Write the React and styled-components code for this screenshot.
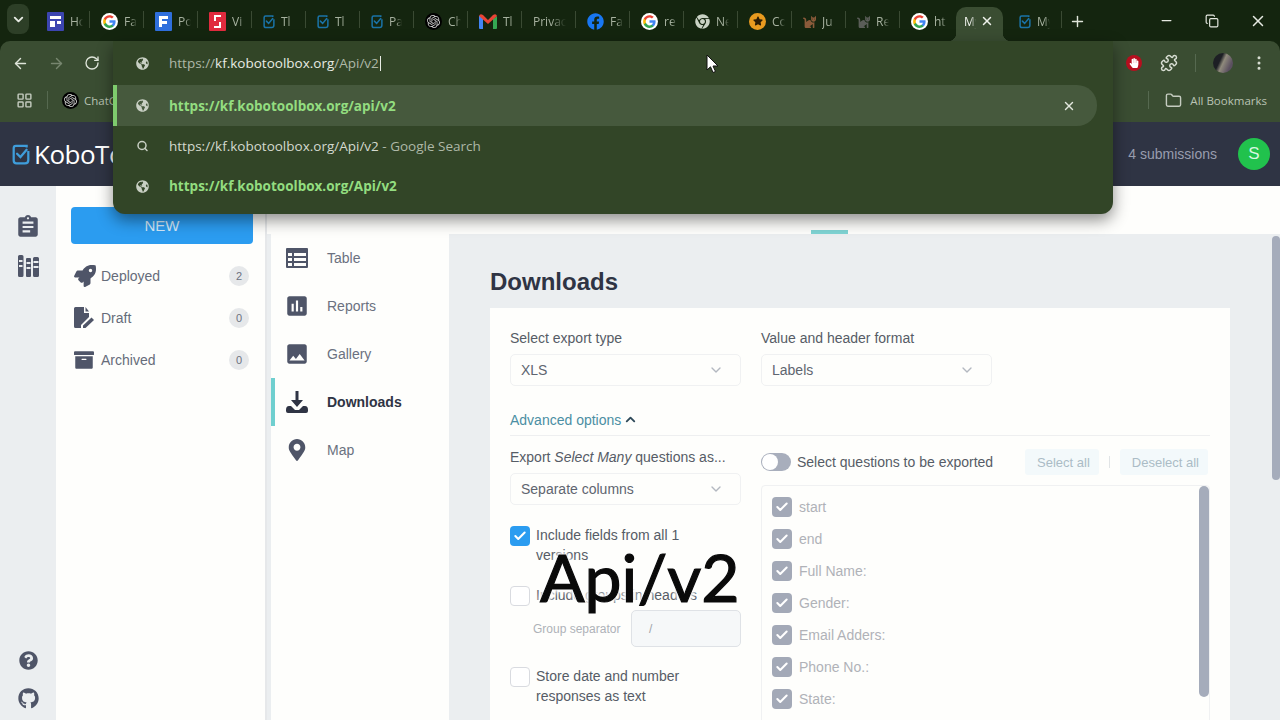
import styled, { createGlobalStyle } from "styled-components";
import {
  ChevronDown,
  ChevronUp,
  ArrowLeft,
  ArrowRight,
  RotateCw,
  X,
  Plus,
  Minus,
  Search,
  Puzzle,
  Folder,
  LayoutGrid,
  EllipsisVertical,
  Check,
  Copy,
} from "lucide-react";
import {
  FaRocket,
  FaArchive,
  FaQuestionCircle,
  FaGithub,
  FaFacebook,
  FaChrome,
  FaStar,
  FaHandPaper,
  FaGlobeAmericas,
  FaMapMarkerAlt,
  FaCat,
} from "react-icons/fa";
import { MdAssessment, MdImage, MdAssignment } from "react-icons/md";
import { SiOpenai } from "react-icons/si";

const GlobalStyle = createGlobalStyle`
  html, body {
    margin: 0;
    padding: 0;
    width: 1280px;
    height: 720px;
    overflow: hidden;
    background: #ebeef0;
  }
  * { box-sizing: border-box; }
`;

function GoogleIcon() {
  return (
    <svg width="17" height="17" viewBox="0 0 24 24">
      <circle cx="12" cy="12" r="12" fill="#fff" />
      <path fill="#4285F4" d="M20.6 12.2c0-.6-.1-1.2-.2-1.8H12v3.4h4.8c-.2 1.1-.8 2-1.8 2.7v2.2h2.9c1.7-1.5 2.7-3.8 2.7-6.5z" />
      <path fill="#34A853" d="M12 21c2.4 0 4.4-.8 5.9-2.2L15 16.6c-.8.5-1.8.9-3 .9-2.3 0-4.3-1.6-5-3.7H4v2.3C5.5 19 8.5 21 12 21z" />
      <path fill="#FBBC05" d="M7 13.8c-.2-.5-.3-1.2-.3-1.8s.1-1.2.3-1.8V7.9H4C3.400 9.100 3 10.500 3 12s.4 2.900 1 4.100l3-2.300z" />
      <path fill="#EA4335" d="M12 6.500c1.300 0 2.500.5 3.400 1.300l2.600-2.600C16.400 3.800 14.400 3 12 3 8.500 3 5.500 5 4 7.900l3 2.300c.7-2.100 2.700-3.700 5-3.700z" />
    </svg>
  );
}

function KoboMark({ size = 18, color = "#3f9ddb" }) {
  return (
    <svg width={size} height={size * 1.25} viewBox="0 0 16 20" fill="none" stroke={color} strokeWidth="2">
      <path d="M13 4 V2.500 H3.500 Q1.500 2.500 1.500 4.500 V15.500 Q1.500 18 4 18 H11.500 Q14.500 18 14.500 15 V7" />
      <path d="M4.500 9.500 L7.500 12.500 L13 6" strokeLinecap="round" />
    </svg>
  );
}

function SheetIcon({ color, children }) {
  return (
    <svg width="17" height="19" viewBox="0 0 17 19">
      <rect width="17" height="19" fill={color} rx="1" />
      {children}
    </svg>
  );
}

function GmailIcon() {
  return (
    <svg width="18" height="15" viewBox="0 0 18 15">
      <path fill="#4285f4" d="M0 2 H4 V15 H1 Q0 15 0 14 Z" />
      <path fill="#34a853" d="M14 5 L18 2 V14 Q18 15 17 15 H14 Z" />
      <path fill="#ea4335" d="M0 2 Q1 -1 4 1 L9 6 L14 1 Q17 -1 18 2 L9 10 Z" />
    </svg>
  );
}

function BadgeIcon({ children, $bg }) {
  return <RoundBadge $bg={$bg}>{children}</RoundBadge>;
}

function TableIcon() {
  return (
    <svg width="22" height="20" viewBox="0 0 22 20">
      <path
        fill="#4f5568"
        fillRule="evenodd"
        d="M1 0 H21 Q22 0 22 1 V19 Q22 20 21 20 H1 Q0 20 0 19 V1 Q0 0 1 0 Z M2 5 V8 H6 V5 Z M8 5 V8 H20 V5 Z M2 10 V13 H6 V10 Z M8 10 V13 H20 V10 Z M2 15 V18 H6 V15 Z M8 15 V18 H20 V15 Z"
      />
    </svg>
  );
}

function DownloadIcon() {
  return (
    <svg width="22" height="22" viewBox="0 0 22 22">
      <path fill="#2f3444" d="M9.500 0 H12.500 V9 H17 L11 16 L5 9 H9.500 Z" />
      <path fill="#2f3444" d="M0 19 Q0 15 3 15 H5 L9 19 H13 L17 15 H19 Q22 15 22 19 V20 Q22 22 20 22 H2 Q0 22 0 20 Z" />
    </svg>
  );
}

function DraftIcon() {
  return (
    <svg width="22" height="23" viewBox="0 0 22 23">
      <path fill="#4f5568" d="M1.500 0 H10 V6 H15 V10 L7 18 V21 H1.500 Q0 21 0 19.500 V1.500 Q0 0 1.500 0 Z" />
      <path fill="#4f5568" d="M11.500 0 L15 4.500 H11.500 Z" />
      <path fill="#4f5568" d="M9 21 V18.500 L17.500 10.500 L20 13 L11.500 21 Z" />
    </svg>
  );
}

function LibraryIcon() {
  return (
    <svg width="21" height="22" viewBox="0 0 21 22">
      <path
        fill="#4f5568"
        fillRule="evenodd"
        d="M1.500 0 H4 Q5.500 0 5.500 1.500 V20.500 Q5.500 22 4 22 H1.500 Q0 22 0 20.500 V1.500 Q0 0 1.500 0 Z M1 5 V7 H4.500 V5 Z M1 10 V12 H4.500 V10 Z"
      />
      <path
        fill="#4f5568"
        fillRule="evenodd"
        d="M9 3 H12 Q13 3 13 4 V21 Q13 22 12 22 H9 Q8 22 8 21 V4 Q8 3 9 3 Z M8.500 7 V9 H12.500 V7 Z M8.500 12 V14 H12.500 V12 Z"
      />
      <path
        fill="#4f5568"
        fillRule="evenodd"
        d="M16.500 2 H19.500 Q21 2 21 3.500 V20.500 Q21 22 19.500 22 H16.500 Q15 22 15 20.500 V3.500 Q15 2 16.500 2 Z M15.500 6 V8 H20.500 V6 Z M15.500 11 V13 H20.500 V11 Z"
      />
    </svg>
  );
}

const tabs = [
  { label: "Ho", icon: <SheetIcon color="#3c45b0"><path fill="#fff" d="M3 4 H14 V7 H3 Z M3 9 H8 V15 H3 Z M10 9 H14 V12 H10 Z" /></SheetIcon> },
  { label: "Fa", icon: <GoogleIcon /> },
  { label: "Po", icon: <SheetIcon color="#2f6fdc"><path fill="#fff" d="M4 4 H13 V7 H7 V9 H12 V12 H7 V15 H4 Z" /></SheetIcon> },
  { label: "Vi", icon: <SheetIcon color="#e02b3e"><path fill="none" stroke="#fff" strokeWidth="2" d="M12 4 H6 V9 M5 15 H11 V10" /></SheetIcon> },
  { label: "Tl", icon: <KoboMark size={12} color="#1a73a8" /> },
  { label: "Tl", icon: <KoboMark size={12} color="#1a73a8" /> },
  { label: "Pa", icon: <KoboMark size={12} color="#1a73a8" /> },
  { label: "Ch", icon: <BadgeIcon $bg="#000"><SiOpenai size={13} color="#cfcfcf" /></BadgeIcon> },
  { label: "Tl", icon: <GmailIcon /> },
  { label: "Privacy", wide: true },
  { label: "Fa", icon: <FaFacebook size={17} color="#1877f2" /> },
  { label: "re", icon: <GoogleIcon /> },
  { label: "Ne", icon: <FaChrome size={15} color="#c9d2c4" /> },
  { label: "Co", icon: <BadgeIcon $bg="#e89a1f"><FaStar size={10} color="#2a1c05" /></BadgeIcon> },
  { label: "Ju", icon: <FaCat size={13} color="#8a5a3a" /> },
  { label: "Re", icon: <FaCat size={13} color="#5a5d58" /> },
  { label: "ht", icon: <GoogleIcon /> },
  { label: "My", active: true },
  { label: "My", icon: <KoboMark size={12} color="#1a73a8" /> },
];

const navItems = [
  { label: "Deployed", count: 2, icon: <FaRocket size={22} color="#4f5568" /> },
  { label: "Draft", count: 0, icon: <DraftIcon /> },
  { label: "Archived", count: 0, icon: <FaArchive size={20} color="#4f5568" /> },
];

const subItems = [
  { label: "Table", icon: <TableIcon /> },
  { label: "Reports", icon: <MdAssessment size={26} color="#4f5568" /> },
  { label: "Gallery", icon: <MdImage size={26} color="#4f5568" /> },
  { label: "Downloads", icon: <DownloadIcon />, active: true },
  { label: "Map", icon: <FaMapMarkerAlt size={22} color="#4f5568" /> },
];

const questions = ["start", "end", "Full Name:", "Gender:", "Email Adders:", "Phone No.:", "State:"];

export default function App() {
  return (
    <Page>
      <GlobalStyle />
      <TabStrip>
        <StripMenu>
          <ChevronDown size={15} strokeWidth={3} />
        </StripMenu>
        {tabs.map((tab, i) => (
          <Tab key={i} $active={tab.active} $last={tabs[i + 1]?.active}>
            {tab.icon}
            <TabLabel $wide={tab.wide} $active={tab.active}>{tab.label}</TabLabel>
            {tab.active && <X size={14} strokeWidth={2.5} />}
          </Tab>
        ))}
        <NewTab>
          <Plus size={17} />
        </NewTab>
        <WindowControls>
          <Minus size={15} />
          <Copy size={14} />
          <X size={18} />
        </WindowControls>
      </TabStrip>

      <Toolbar>
        <ToolIcons>
          <ArrowLeft size={17} color="#dfe5da" />
          <ArrowRight size={17} color="#77866f" />
          <RotateCw size={16} color="#dfe5da" />
        </ToolIcons>
        <ToolEnd>
          <HandBadge>
            <FaHandPaper size={10} color="#fff" />
          </HandBadge>
          <Puzzle size={18} color="#d7ddd2" />
          <ThinRule />
          <Avatar />
          <EllipsisVertical size={18} color="#d7ddd2" />
        </ToolEnd>
      </Toolbar>

      <BookmarkBar>
        <LayoutGrid size={17} color="#c5ccc0" />
        <ThinRule />
        <BadgeIcon $bg="#000">
          <SiOpenai size={13} color="#cfcfcf" />
        </BadgeIcon>
        <BookmarkText $tight>ChatGPT</BookmarkText>
        <BookmarkEnd>
          <ThinRule />
          <Folder size={17} color="#c5ccc0" />
          <BookmarkText>All Bookmarks</BookmarkText>
        </BookmarkEnd>
      </BookmarkBar>

      <AppHeader>
        <Logo>
          <KoboMark size={18} />
          <LogoText>KoboToolbox</LogoText>
        </Logo>
        <HeaderEnd>
          <Submissions>4 submissions</Submissions>
          <UserBubble>S</UserBubble>
        </HeaderEnd>
      </AppHeader>

      <AppBody>
        <Rail>
          <RailGroup $gap={15}>
            <MdAssignment size={26} color="#4f5568" />
            <LibraryIcon />
          </RailGroup>
          <RailGroup $gap={18}>
            <FaQuestionCircle size={19} color="#4f5568" />
            <FaGithub size={21} color="#4f5568" />
          </RailGroup>
        </Rail>

        <NavColumn>
          <NewButton>NEW</NewButton>
          <NavList>
            {navItems.map((item) => (
              <NavRow key={item.label}>
                <NavIcon>{item.icon}</NavIcon>
                <NavLabel>{item.label}</NavLabel>
                <Count>{item.count}</Count>
              </NavRow>
            ))}
          </NavList>
        </NavColumn>

        <MainColumn>
          <TabRow>
            <PageTab>SUMMARY</PageTab>
            <PageTab>FORM</PageTab>
            <PageTab $active>DATA</PageTab>
            <PageTab>SETTINGS</PageTab>
          </TabRow>
          <ContentRow>
            <SubNav>
              {subItems.map((item) => (
                <SubRow key={item.label} $active={item.active}>
                  <SubIcon>{item.icon}</SubIcon>
                  <SubLabel $active={item.active}>{item.label}</SubLabel>
                </SubRow>
              ))}
            </SubNav>
            <Main>
              <Heading>Downloads</Heading>
              <Panel>
                <TopFields>
                  <Field>
                    <FieldLabel>Select export type</FieldLabel>
                    <SelectBox>
                      XLS
                      <ChevronDown size={16} color="#b3b8c0" />
                    </SelectBox>
                  </Field>
                  <Field>
                    <FieldLabel>Value and header format</FieldLabel>
                    <SelectBox>
                      Labels
                      <ChevronDown size={16} color="#b3b8c0" />
                    </SelectBox>
                  </Field>
                </TopFields>
                <AdvancedRow>
                  Advanced options
                  <ChevronUp size={15} strokeWidth={3} color="#2f4a5a" />
                </AdvancedRow>
                <Columns>
                  <LeftColumn>
                    <FieldLabel>
                      Export <em>Select Many</em> questions as...
                    </FieldLabel>
                    <SelectBox>
                      Separate columns
                      <ChevronDown size={16} color="#b3b8c0" />
                    </SelectBox>
                    <CheckRow $top={21}>
                      <Box $on>
                        <Check size={14} strokeWidth={3.5} color="#fff" />
                      </Box>
                      <CheckText>Include fields from all 1 versions</CheckText>
                    </CheckRow>
                    <CheckRow $top={20}>
                      <Box />
                      <CheckText>Include groups in headers</CheckText>
                    </CheckRow>
                    <SeparatorRow>
                      <SeparatorLabel>Group separator</SeparatorLabel>
                      <SeparatorInput>/</SeparatorInput>
                    </SeparatorRow>
                    <CheckRow $top={20}>
                      <Box />
                      <CheckText>Store date and number responses as text</CheckText>
                    </CheckRow>
                  </LeftColumn>
                  <RightColumn>
                    <QuestionHead>
                      <Toggle />
                      <ToggleLabel>Select questions to be exported</ToggleLabel>
                      <HeadActions>
                        <GhostButton>Select all</GhostButton>
                        <ActionRule />
                        <GhostButton>Deselect all</GhostButton>
                      </HeadActions>
                    </QuestionHead>
                    <QuestionList>
                      {questions.map((q) => (
                        <QuestionRow key={q}>
                          <Box $muted>
                            <Check size={14} strokeWidth={3.5} color="#fff" />
                          </Box>
                          <QuestionText>{q}</QuestionText>
                        </QuestionRow>
                      ))}
                      <ListThumb />
                    </QuestionList>
                  </RightColumn>
                </Columns>
              </Panel>
            </Main>
            <PageThumb />
          </ContentRow>
        </MainColumn>
      </AppBody>

      <OmniboxPopup>
        <OmniInput>
          <FaGlobeAmericas size={13} color="#c8cfc3" />
          <InputText>
            https://<b>kf.kobotoolbox.org</b>/Api/v2
            <Caret />
          </InputText>
        </OmniInput>
        <OmniRow $selected>
          <FaGlobeAmericas size={13} color="#c8cfc3" />
          <LinkText>https://kf.kobotoolbox.org/api/v2</LinkText>
          <RowClose>
            <X size={14} strokeWidth={2.5} color="#e2e7de" />
          </RowClose>
        </OmniRow>
        <OmniRow>
          <Search size={12} strokeWidth={3} color="#c8cfc3" />
          <SuggestText>
            https://kf.kobotoolbox.org/Api/v2<Dim> - Google Search</Dim>
          </SuggestText>
        </OmniRow>
        <OmniRow>
          <FaGlobeAmericas size={13} color="#c8cfc3" />
          <LinkText>https://kf.kobotoolbox.org/Api/v2</LinkText>
        </OmniRow>
      </OmniboxPopup>

      <Pointer width="14" height="20" viewBox="0 0 14 20">
        <path d="M1 1 V16 L4.500 12.800 L7 18.500 L9.500 17.500 L7 12 H12 Z" fill="#fff" stroke="#111" strokeWidth="1" />
      </Pointer>

      <Caption>Api/v2</Caption>
    </Page>
  );
}

const Page = styled.div`
  position: relative;
  width: 1280px;
  height: 720px;
  overflow: hidden;
  display: flex;
  flex-direction: column;
  font-family: "Liberation Sans", Arial, sans-serif;
  background: #14250f;
`;

const TabStrip = styled.div`
  height: 41px;
  flex: none;
  display: flex;
  align-items: flex-end;
  background: #14250f;
  color: #b9c3b3;
  font-family: "Open Sans", sans-serif;
`;

const StripMenu = styled.div`
  width: 22px;
  height: 30px;
  margin: 0 7px 7px;
  border-radius: 8px;
  background: #2d3f27;
  color: #e6eae2;
  display: flex;
  align-items: center;
  justify-content: center;
`;

const Tab = styled.div`
  position: relative;
  width: ${(p) => (p.$active ? "47px" : "54px")};
  margin: ${(p) => (p.$active ? "0 5px 0 2px" : "0")};
  height: 34px;
  padding: 0 0 0 ${(p) => (p.$active ? "8px" : "11px")};
  display: flex;
  align-items: center;
  gap: ${(p) => (p.$active ? "4px" : "6px")};
  flex: none;
  border-radius: 10px 10px 0 0;
  background: ${(p) => (p.$active ? "#3a4d32" : "transparent")};
  color: ${(p) => (p.$active ? "#eef1eb" : "#a7b2a0")};
  & > svg {
    flex: none;
    margin-bottom: 6px;
  }
  & > div {
    margin-bottom: 6px;
  }
  &::before {
    content: "";
    position: absolute;
    display: ${(p) => (p.$active ? "block" : "none")};
    left: -8px;
    bottom: 0;
    width: 8px;
    height: 8px;
    background: radial-gradient(circle at 0 0, transparent 8px, #3a4d32 8.5px);
  }
  &::after {
    content: "";
    position: absolute;
    display: ${(p) => (p.$last ? "none" : "block")};
    right: ${(p) => (p.$active ? "-8px" : "0")};
    bottom: ${(p) => (p.$active ? "0" : "13px")};
    width: ${(p) => (p.$active ? "8px" : "1px")};
    height: ${(p) => (p.$active ? "8px" : "17px")};
    background: ${(p) =>
      p.$active ? "radial-gradient(circle at 100% 0, transparent 8px, #3a4d32 8.5px)" : "#3a4a33"};
  }
`;

const TabLabel = styled.span`
  font-size: 12px;
  margin-bottom: 6px;
  width: ${(p) => (p.$wide ? "33px" : p.$active ? "12px" : "13px")};
  overflow: hidden;
  white-space: nowrap;
  flex: none;
  mask-image: linear-gradient(to right, #000 55%, transparent);
`;

const RoundBadge = styled.div`
  width: 17px;
  height: 17px;
  border-radius: 50%;
  flex: none;
  background: ${(p) => p.$bg};
  display: flex;
  align-items: center;
  justify-content: center;
`;

const NewTab = styled.div`
  width: 30px;
  height: 34px;
  padding-bottom: 6px;
  color: #dfe5da;
  display: flex;
  align-items: center;
  justify-content: center;
`;

const WindowControls = styled.div`
  margin-left: auto;
  height: 41px;
  width: 108px;
  margin-right: 13px;
  color: #e6eae2;
  display: flex;
  align-items: center;
  justify-content: space-between;
`;

const Toolbar = styled.div`
  height: 44px;
  flex: none;
  padding: 0 12px;
  display: flex;
  align-items: center;
  justify-content: space-between;
  background: #3a4d32;
  border-radius: 10px 10px 0 0;
`;

const ToolIcons = styled.div`
  display: flex;
  align-items: center;
  gap: 19px;
`;

const ToolEnd = styled.div`
  display: flex;
  align-items: center;
  gap: 17px;
`;

const HandBadge = styled.div`
  width: 16px;
  height: 16px;
  margin-right: 1px;
  border-radius: 50%;
  background: #b70f1f;
  display: flex;
  align-items: center;
  justify-content: center;
`;

const ThinRule = styled.div`
  width: 1px;
  height: 18px;
  background: #566950;
`;

const Avatar = styled.div`
  width: 20px;
  height: 20px;
  border-radius: 50%;
  background: linear-gradient(115deg, #1d1f24 35%, #8f8a7c 50%, #5b5060 80%);
`;

const BookmarkBar = styled.div`
  height: 37px;
  flex: none;
  padding: 0 13px 7px 16px;
  display: flex;
  align-items: center;
  gap: 14px;
  background: #3a4d32;
`;

const BookmarkText = styled.span`
  margin-left: ${(p) => (p.$tight ? "-9px" : "-8px")};
  font-family: "Open Sans", sans-serif;
  font-size: 11.5px;
  color: #b9c3b3;
  white-space: nowrap;
`;

const BookmarkEnd = styled.div`
  margin-left: auto;
  display: flex;
  align-items: center;
  gap: 16px;
`;

const AppHeader = styled.header`
  height: 64px;
  flex: none;
  padding: 0 10px 0 12px;
  display: flex;
  align-items: center;
  justify-content: space-between;
  background: #2f3444;
`;

const Logo = styled.div`
  display: flex;
  align-items: center;
  gap: 4px;
`;

const LogoText = styled.span`
  font-family: "Open Sans", sans-serif;
  font-size: 26px;
  color: #fff;
  letter-spacing: -0.5px;
`;

const HeaderEnd = styled.div`
  display: flex;
  align-items: center;
  gap: 21px;
`;

const Submissions = styled.span`
  font-size: 14px;
  color: #989dae;
`;

const UserBubble = styled.div`
  width: 32px;
  height: 32px;
  border-radius: 50%;
  background: #21c24d;
  color: #d9f7e0;
  font-size: 17px;
  display: flex;
  align-items: center;
  justify-content: center;
`;

const AppBody = styled.div`
  flex: 1;
  min-height: 0;
  display: flex;
  background: #ebeef0;
`;

const Rail = styled.aside`
  width: 56px;
  flex: none;
  padding: 28px 0 11px;
  display: flex;
  flex-direction: column;
  justify-content: space-between;
  background: #ebeef0;
`;

const RailGroup = styled.div`
  display: flex;
  flex-direction: column;
  align-items: center;
  gap: ${(p) => p.$gap}px;
`;

const NavColumn = styled.nav`
  width: 211px;
  flex: none;
  padding: 21px 12px 0 15px;
  background: #fefefc;
  border-right: 2px solid #e6e8ea;
`;

const NewButton = styled.div`
  height: 37px;
  border-radius: 4px;
  background: #2b9cf0;
  color: #d4eafb;
  font-size: 15px;
  display: flex;
  align-items: center;
  justify-content: center;
`;

const NavList = styled.div`
  margin-top: 12px;
  display: flex;
  flex-direction: column;
  gap: 2px;
`;

const NavRow = styled.div`
  height: 40px;
  display: flex;
  align-items: center;
  padding-right: 4px;
`;

const NavIcon = styled.div`
  width: 30px;
  padding-left: 3px;
  display: flex;
  align-items: center;
`;

const NavLabel = styled.span`
  flex: 1;
  font-size: 14px;
  color: #666c7a;
`;

const Count = styled.span`
  width: 20px;
  height: 20px;
  border-radius: 50%;
  background: #e6e8ea;
  color: #6d7280;
  font-size: 11px;
  display: flex;
  align-items: center;
  justify-content: center;
`;

const MainColumn = styled.div`
  flex: 1;
  min-width: 0;
  display: flex;
  flex-direction: column;
`;

const TabRow = styled.div`
  height: 48px;
  flex: none;
  padding-left: 302px;
  display: flex;
  gap: 62px;
  background: #fefefc;
`;

const PageTab = styled.div`
  height: 48px;
  padding-top: 14px;
  font-size: 14px;
  letter-spacing: 0.5px;
  color: #565c6b;
  border-bottom: 4px solid ${(p) => (p.$active ? "#7fd4d4" : "transparent")};
`;

const ContentRow = styled.div`
  position: relative;
  flex: 1;
  min-height: 0;
  display: flex;
  background: #ebeef0;
`;

const SubNav = styled.div`
  width: 178px;
  flex: none;
  margin-left: 4px;
  background: #fefefc;
`;

const SubRow = styled.div`
  height: 48px;
  display: flex;
  align-items: center;
  border-left: 4px solid ${(p) => (p.$active ? "#6fcfcf" : "transparent")};
`;

const SubIcon = styled.div`
  width: 52px;
  padding: 0 14px 0 5px;
  display: flex;
  align-items: center;
  justify-content: center;
  flex: none;
`;

const SubLabel = styled.span`
  font-size: 14px;
  font-weight: ${(p) => (p.$active ? 700 : 400)};
  color: ${(p) => (p.$active ? "#2f3444" : "#6b7180")};
`;

const Main = styled.main`
  flex: 1;
  min-width: 0;
  padding: 32px 50px 0 41px;
  overflow: hidden;
`;

const Heading = styled.h1`
  margin: 0;
  height: 42px;
  font-size: 24px;
  line-height: 32px;
  font-weight: 700;
  color: #2f3444;
`;

const Panel = styled.section`
  height: 500px;
  padding: 20px 20px 0;
  background: #fefefc;
`;

const TopFields = styled.div`
  display: flex;
  gap: 20px;
`;

const Field = styled.div`
  width: 231px;
`;

const FieldLabel = styled.div`
  height: 20px;
  margin-bottom: 6px;
  font-size: 14px;
  line-height: 20px;
  white-space: nowrap;
  color: #565c66;
`;

const SelectBox = styled.div`
  height: 32px;
  padding: 0 16px 0 10px;
  display: flex;
  align-items: center;
  justify-content: space-between;
  border: 1px solid #f0f1f2;
  border-radius: 5px;
  font-size: 14px;
  color: #5f6570;
`;

const AdvancedRow = styled.div`
  margin-top: 24px;
  height: 26px;
  padding-bottom: 6px;
  display: flex;
  align-items: center;
  gap: 2px;
  font-size: 14px;
  color: #4b8ea3;
  border-bottom: 1px solid #eeeff0;
`;

const Columns = styled.div`
  margin-top: 11px;
  display: flex;
  gap: 20px;
`;

const LeftColumn = styled.div`
  width: 231px;
  flex: none;
`;

const RightColumn = styled.div`
  flex: 1;
  min-width: 0;
`;

const CheckRow = styled.div`
  margin-top: ${(p) => p.$top}px;
  display: flex;
  gap: 6px;
`;

const Box = styled.div`
  width: 20px;
  height: 20px;
  flex: none;
  border-radius: 4px;
  display: flex;
  align-items: center;
  justify-content: center;
  background: ${(p) => (p.$on ? "#2b9cf0" : p.$muted ? "#a3a9b7" : "#fff")};
  border: ${(p) => (p.$on || p.$muted ? "none" : "1px solid #d9dbe0")};
`;

const CheckText = styled.div`
  max-width: 175px;
  min-height: 20px;
  font-size: 14px;
  line-height: 20px;
  margin-top: -1px;
  margin-bottom: 1px;
  color: #565c66;
`;

const SeparatorRow = styled.div`
  margin-top: 4px;
  padding-left: 23px;
  display: flex;
  align-items: center;
  justify-content: space-between;
`;

const SeparatorLabel = styled.span`
  font-size: 12px;
  color: #aeb2b8;
`;

const SeparatorInput = styled.div`
  width: 110px;
  height: 37px;
  padding-left: 17px;
  display: flex;
  align-items: center;
  background: #f6f8f9;
  border: 1px solid #dfe2e6;
  border-radius: 5px;
  font-size: 12px;
  color: #a0a4aa;
`;

const QuestionHead = styled.div`
  height: 26px;
  margin-top: 2px;
  display: flex;
  align-items: center;
`;

const Toggle = styled.div`
  position: relative;
  width: 30px;
  height: 18px;
  flex: none;
  border-radius: 9px;
  background: #a8aebc;
  &::before {
    content: "";
    position: absolute;
    left: 1px;
    top: 1px;
    width: 16px;
    height: 16px;
    border-radius: 50%;
    background: #fff;
  }
`;

const ToggleLabel = styled.span`
  margin-left: 6px;
  font-size: 14px;
  color: #565c66;
`;

const HeadActions = styled.div`
  margin-left: auto;
  margin-right: 2px;
  display: flex;
  align-items: center;
  gap: 10px;
`;

const GhostButton = styled.div`
  height: 26px;
  padding: 0 9px 0 12px;
  display: flex;
  align-items: center;
  background: #f3f9fb;
  border-radius: 3px;
  font-size: 13px;
  color: #abbcc6;
`;

const ActionRule = styled.div`
  width: 1px;
  height: 12px;
  background: #e1e4e6;
`;

const QuestionList = styled.div`
  position: relative;
  margin-top: 10px;
  height: 260px;
  padding: 5px 0 0 10px;
  border: 1px solid #f0f1f2;
  border-radius: 4px;
`;

const QuestionRow = styled.div`
  height: 32px;
  display: flex;
  align-items: center;
  gap: 7px;
`;

const QuestionText = styled.span`
  font-size: 14px;
  color: #b0b2b8;
`;

const ListThumb = styled.div`
  position: absolute;
  top: 0;
  right: 0;
  width: 10px;
  height: 211px;
  border-radius: 5px;
  background: #a5acbb;
`;

const PageThumb = styled.div`
  position: absolute;
  top: 2px;
  right: 0;
  width: 8px;
  height: 244px;
  border-radius: 4px;
  background: #a5acbb;
`;

const OmniboxPopup = styled.div`
  position: absolute;
  left: 113px;
  top: 41px;
  width: 1000px;
  height: 173px;
  background: #324527;
  border-radius: 0 0 12px 12px;
  box-shadow: 0 6px 16px rgba(0, 0, 0, 0.45);
`;

const OmniInput = styled.div`
  height: 44px;
  padding-left: 23px;
  display: flex;
  align-items: center;
  gap: 20px;
`;

const OmniRow = styled.div`
  height: ${(p) => (p.$selected ? "41px" : "40px")};
  margin-right: 16px;
  padding-left: ${(p) => (p.$selected ? "19px" : "23px")};
  display: flex;
  align-items: center;
  gap: 20px;
  background: ${(p) => (p.$selected ? "#46593d" : "transparent")};
  border-left: ${(p) => (p.$selected ? "4px solid #7ecb6d" : "none")};
  border-radius: 0 20px 20px 0;
  font-family: "Open Sans", sans-serif;
  & > svg {
    flex: none;
    width: 13px;
  }
`;

const InputText = styled.span`
  font-family: "Open Sans", sans-serif;
  font-size: 13.5px;
  color: #aeb8a7;
  display: flex;
  align-items: center;
  & b {
    font-weight: 400;
    color: #e8ece4;
  }
`;

const Caret = styled.i`
  width: 1px;
  height: 15px;
  margin-left: 1px;
  background: #e8ece4;
`;

const LinkText = styled.span`
  font-size: 13.5px;
  font-weight: 700;
  color: #93dd80;
`;

const SuggestText = styled.span`
  font-size: 13.5px;
  color: #d4dacf;
`;

const Dim = styled.span`
  color: #aeb8a7;
`;

const RowClose = styled.span`
  margin-left: auto;
  margin-right: 21px;
  display: flex;
`;

const Pointer = styled.svg`
  position: absolute;
  left: 706px;
  top: 54px;
`;

const Caption = styled.div`
  position: absolute;
  left: 540px;
  top: 537px;
  font-family: Lato, sans-serif;
  font-size: 66px;
  line-height: 80px;
  color: #0a0a0a;
  -webkit-text-stroke: 1.2px #0a0a0a;
  text-shadow: 0 0 3px #fff, 0 0 4px #fff, 0 0 5px #fff, 0 0 6px #fff, 0 0 8px #fff;
`;
